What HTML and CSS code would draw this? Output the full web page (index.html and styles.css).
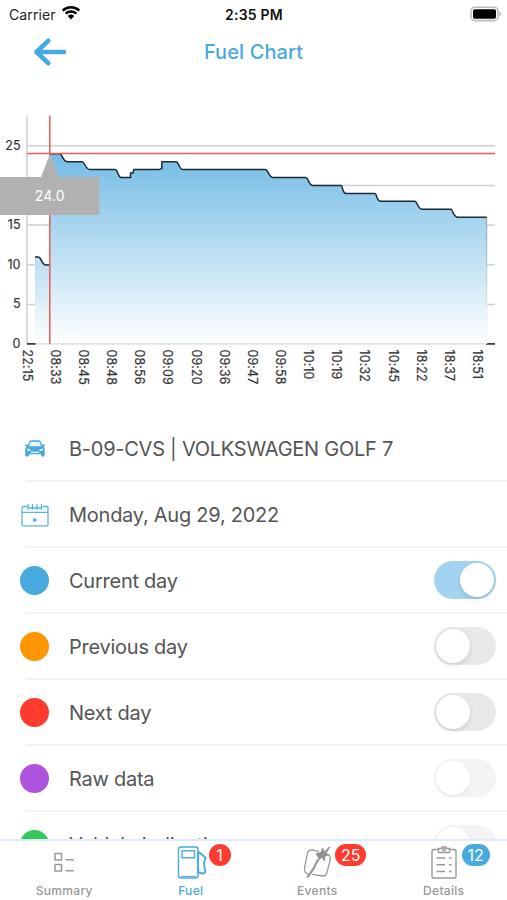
FILE: index.html
```
<!DOCTYPE html>
<html lang="en">
<head>
    <meta charset="UTF-8">
    <meta name="viewport" content="width=device-width, initial-scale=1.0">
    <title>Fuel Chart</title>
    <link rel="stylesheet" href="styles.css">
</head>
<body>
    <div class="screen">
        <div class="status-bar">
            <div class="carrier">
                <span>Carrier</span>
                <svg width="20" height="15" viewBox="0 0 20 15">
                    <path d="M1.7 5.5a12.2 12.2 0 0 1 16.6 0M4.6 8.6a8 8 0 0 1 10.8 0" fill="none" stroke="#000" stroke-width="2.4"/>
                    <path d="M6.8 11.1a4.7 4.7 0 0 1 6.4 0L10 14.4z"/>
                </svg>
            </div>
            <span class="time">2:35 PM</span>
            <div class="battery">
                <svg width="32" height="16" viewBox="0 0 32 16">
                    <rect x="1" y="1.2" width="27" height="13.4" rx="4" fill="#fff" stroke="#bdbdbd" stroke-width="1.6"/>
                    <rect x="3" y="3.2" width="23" height="9.6" rx="1.8"/>
                    <path d="M29.4 5.6q3 2.2 0 4.6z" fill="#aaa"/>
                </svg>
            </div>
        </div>

        <header>
            <svg class="back" width="34" height="28" viewBox="0 0 34 28">
                <path d="M31 14H3.5M15.2 2.8L3.5 14l11.7 11.2" fill="none" stroke="#48a9df" stroke-width="4.6" stroke-linecap="round" stroke-linejoin="round"/>
            </svg>
            <h1>Fuel Chart</h1>
        </header>

        <section class="chart">
            <svg width="507" height="290" viewBox="0 110 507 290">
                <defs>
                    <linearGradient id="fill" gradientUnits="userSpaceOnUse" x1="0" y1="154" x2="0" y2="344">
                        <stop offset="0" stop-color="#74bce6"/>
                        <stop offset="1" stop-color="#ffffff"/>
                    </linearGradient>
                    <linearGradient id="fillLow" gradientUnits="userSpaceOnUse" x1="0" y1="257" x2="0" y2="344">
                        <stop offset="0" stop-color="#b8ddf2"/>
                        <stop offset="1" stop-color="#ffffff"/>
                    </linearGradient>
                    <linearGradient id="edge" gradientUnits="userSpaceOnUse" x1="0" y1="217" x2="0" y2="344">
                        <stop offset="0" stop-color="#8fa5b2"/>
                        <stop offset="1" stop-color="#ffffff"/>
                    </linearGradient>
                </defs>

                <!-- grid -->
                <g class="grid">
                    <path d="M27 145.8H495M27 185.6H495M27 225H495M27 264.8H495M27 304.4H495"/>
                    <path d="M27 115.5V344"/>
                </g>

                <!-- area -->
                <path fill="url(#fillLow)" d="M35 257H38C42 257 41 265 46 265H49.500V344H35z"/>
                <path fill="url(#fill)" d="M49.500 153.700H60C62 153.700 63 161.700 67 161.700H82.500C84 161.700 86 169.600 90 169.600H115C118 169.600 118 177.600 121 177.600H130.500V173H133L134 169.600H159L161.800 168.500V161.700H176C179 161.700 179 169.600 183 169.600H265.500C268 169.600 269 177.600 273 177.600H305.500C309 177.600 308 185.600 313 185.600H341C343 185.600 342 193.400 346 193.400H375C377 193.400 376 201.300 381 201.300H415C417 201.300 418 209.300 422 209.300H451C453 209.300 453 217.200 458 217.200H486.500V344H49.500z"/>
                <path d="M27 343.900H495" stroke="#e2e2e2" stroke-width="1.600"/>
                <path d="M27 343.900H35.500M486 343.900H495" stroke="#3c3c3c" stroke-width="1.800"/>
                <rect x="486" y="217" width="1.200" height="127" fill="url(#edge)"/>

                <!-- level -->
                <path class="level" d="M35 257H38C42 257 41 265 46 265H49.500"/>
                <path class="level" d="M49.500 153.700H60C62 153.700 63 161.700 67 161.700H82.500C84 161.700 86 169.600 90 169.600H115C118 169.600 118 177.600 121 177.600H130.500V173H133L134 169.600H159L161.800 168.500V161.700H176C179 161.700 179 169.600 183 169.600H265.500C268 169.600 269 177.600 273 177.600H305.500C309 177.600 308 185.600 313 185.600H341C343 185.600 342 193.400 346 193.400H375C377 193.400 376 201.300 381 201.300H415C417 201.300 418 209.300 422 209.300H451C453 209.300 453 217.200 458 217.200H486.500"/>

                <!-- selected value -->
                <path class="cursor" d="M49.800 115.500V344M27 153.600H495"/>
                <path d="M50 154L59 177H99.200V215H0V177H41z" fill="#b1b1b1"/>
                <text class="marker" x="49.800" y="201">24.0</text>

                <g class="y-labels">
                    <text x="20.500" y="149.500">25</text>
                    <text x="20.500" y="228.700">15</text>
                    <text x="20.500" y="268.500">10</text>
                    <text x="20.500" y="308">5</text>
                    <text x="20.500" y="347.500">0</text>
                </g>
                <g class="x-labels">
                    <text transform="translate(22.500 349.500) rotate(90)">22:15</text>
                    <text transform="translate(50.700 349.500) rotate(90)">08:33</text>
                    <text transform="translate(78.900 349.500) rotate(90)">08:45</text>
                    <text transform="translate(107 349.500) rotate(90)">08:48</text>
                    <text transform="translate(135.200 349.500) rotate(90)">08:56</text>
                    <text transform="translate(163.300 349.500) rotate(90)">09:09</text>
                    <text transform="translate(191.500 349.500) rotate(90)">09:20</text>
                    <text transform="translate(219.600 349.500) rotate(90)">09:36</text>
                    <text transform="translate(247.800 349.500) rotate(90)">09:47</text>
                    <text transform="translate(275.900 349.500) rotate(90)">09:58</text>
                    <text transform="translate(304.100 349.500) rotate(90)">10:10</text>
                    <text transform="translate(332.200 349.500) rotate(90)">10:19</text>
                    <text transform="translate(360.400 349.500) rotate(90)">10:32</text>
                    <text transform="translate(388.500 349.500) rotate(90)">10:45</text>
                    <text transform="translate(416.700 349.500) rotate(90)">18:22</text>
                    <text transform="translate(444.800 349.500) rotate(90)">18:37</text>
                    <text transform="translate(473 349.500) rotate(90)">18:51</text>
                </g>
            </svg>
        </section>

        <ul class="options">
            <li>
                <span class="icon">
                    <svg width="20" height="17" viewBox="0 0 20 17">
                        <path d="M3 7L4.800 2Q5.200 1 6.500 1H13.500Q14.800 1 15.200 2L17 7" fill="#e6f4fc" stroke="#48a9df" stroke-width="1.300"/>
                        <path fill="#48a9df" fill-rule="evenodd" d="M.2 4.600H3L2.800 6.300H17.200L17 4.600H19.800V6L18.600 6.500Q19.700 7.500 19.700 9V15.500Q19.700 16.500 18.700 16.500H17Q16 16.500 16 15.500V14.300H4V15.500Q4 16.500 3 16.500H1.300Q.3 16.500 .3 15.500V9Q.3 7.500 1.400 6.500L.2 6zM2 8.500L2.600 10.500 5.800 10.900 5 9.300zM18 8.500L17.400 10.500 14.200 10.900 15 9.300zM6 11.700V12.900H14V11.700z"/>
                    </svg>
                </span>
                <span class="label plate">B-09-CVS | VOLKSWAGEN GOLF 7</span>
            </li>
            <li>
                <span class="icon">
                    <svg width="28" height="24" viewBox="0 0 28 24" fill="none" stroke="#5cb3e6" stroke-width="1.300">
                        <path d="M6.500 3.500H1.800Q1 3.500 1 4.300V22Q1 22.800 1.800 22.800H26.200Q27 22.800 27 22V4.300Q27 3.500 26.200 3.500H21.500M1 9.300H27M7 5H20.500"/>
                        <path d="M7 1V6.800M11.500 1V6.800M16 1V6.800M20.500 1V6.800"/>
                        <path d="M12 15.500H14.500L16 17 14.500 18.500H12z" fill="#48a9df" stroke="none"/>
                    </svg>
                </span>
                <span class="label date">Monday, Aug 29, 2022</span>
            </li>
            <li>
                <span class="dot current"></span>
                <span class="label">Current day</span>
                <span class="switch on"></span>
            </li>
            <li>
                <span class="dot previous"></span>
                <span class="label">Previous day</span>
                <span class="switch"></span>
            </li>
            <li>
                <span class="dot next"></span>
                <span class="label">Next day</span>
                <span class="switch"></span>
            </li>
            <li>
                <span class="dot raw"></span>
                <span class="label">Raw data</span>
                <span class="switch disabled"></span>
            </li>
            <li>
                <span class="dot vehicle"></span>
                <span class="label">Vehicle indication</span>
                <span class="switch disabled"></span>
            </li>
        </ul>

        <nav>
            <a class="tab">
                <svg width="38" height="36" viewBox="0 0 38 36" fill="none" stroke="#999" stroke-width="1.500">
                    <path d="M10 10.500H16.500V17H10zM10 21.500H16.500V28H10zM20.500 16.700H29M20.500 27.700H29"/>
                </svg>
                <span>Summary</span>
            </a>
            <a class="tab active">
                <svg width="38" height="36" viewBox="0 0 38 36" fill="none" stroke="#48a9df" stroke-width="1.400">
                    <rect x="6.500" y="4" width="19.500" height="31" rx="2.500"/>
                    <rect x="10" y="7.800" width="12.500" height="7"/>
                    <path d="M26 8.500L33.500 14.500 32.500 18Q31.300 21 32.500 24L33.300 28Q33.300 30.800 30.500 30.500L26 29M26 10V30" stroke-width="1.900"/>
                    <path d="M9 33.400H23.500" stroke-width="1"/>
                </svg>
                <span>Fuel</span>
                <b class="badge">1</b>
            </a>
            <a class="tab">
                <svg width="38" height="36" viewBox="0 0 38 36" fill="none" stroke="#999" stroke-width="1.300">
                    <path d="M21 8.300L14 7Q10.500 6.500 9.500 10L6.500 25Q6 29.500 10 31.200M14 31.300L25 33Q28 33.200 28.800 30L32.200 17Q32.500 14 31 11.500"/>
                    <path d="M9.300 34.500Q12.500 30 15 26.500Q18 21 20.500 16" stroke-width="2.200"/>
                    <path d="M21.500 16.500L18 10.500 23 9.500 24.500 5 26.500 9 31 4.500 28 10.500 31 12 27 13 26.500 18 24 14z" fill="#8c8c8c" stroke-width="1"/>
                    <path d="M24 13L32 4"/>
                </svg>
                <span>Events</span>
                <b class="badge wide">25</b>
            </a>
            <a class="tab">
                <svg width="38" height="36" viewBox="0 0 38 36" fill="none" stroke="#999" stroke-width="1.400">
                    <path d="M13 6.500H8.500Q7 6.500 7 8V33.500Q7 35 8.500 35H29.500Q31 35 31 33.500V8Q31 6.500 29.500 6.500H25"/>
                    <path d="M13.500 5.500V9.500H24.500V5.500H22Q21.500 3.800 19 3.800T16 5.500z"/>
                    <circle cx="19" cy="6.500" r="1.400"/>
                    <path d="M11.500 15H20M24 15H26.500M11.500 21.700H20M24 21.700H26.500M11.500 28.500H20M24 28.500H26.500"/>
                </svg>
                <span>Details</span>
                <b class="badge info">12</b>
            </a>
        </nav>
    </div>
</body>
</html>
```
FILE: styles.css
```
* {
    box-sizing: border-box;
}

body {
    margin: 0;
    font-family: Inter, "Liberation Sans", sans-serif;
    background-color: #fff;
    color: #555;
}

.screen {
    display: flex;
    flex-direction: column;
    height: 900px;
    overflow: hidden;
}

/* Status bar */
.status-bar {
    display: grid;
    grid-template-columns: 1fr auto 1fr;
    align-items: center;
    flex: none;
    height: 28px;
    padding: 0 5px 0 9px;
    font-size: 14px;
    color: #222;
}

.carrier {
    display: flex;
    align-items: center;
    gap: 5px;
    letter-spacing: 0.1px;
}

.carrier svg {
    margin-top: -3px;
}

.time {
    margin-left: -3px;
    font-weight: 600;
    letter-spacing: 0.2px;
    color: #111;
}

.battery {
    display: flex;
    justify-content: flex-end;
}

/* Header */
header {
    display: grid;
    grid-template-columns: 100px 1fr 100px;
    align-items: center;
    flex: none;
    height: 48px;
}

.back {
    margin-left: 33px;
}

h1 {
    margin: 0;
    font-size: 20px;
    font-weight: 500;
    letter-spacing: 0.1px;
    text-align: center;
    color: #48a9df;
}

/* Chart */
.chart {
    flex: none;
    height: 340px;
    padding-top: 34px;
}

.chart svg {
    display: block;
}

.grid path {
    stroke: #cfcfcf;
    stroke-width: 1.5;
}

.level {
    fill: none;
    stroke: #1c2b33;
    stroke-width: 1.5;
}

.cursor {
    fill: none;
    stroke: #ee5a52;
    stroke-width: 1.5;
}

.marker {
    font-size: 14px;
    letter-spacing: 0.2px;
    fill: #fff;
    text-anchor: middle;
}

.y-labels {
    font-size: 12.5px;
    fill: #333;
    stroke: #333;
    stroke-width: 0.2;
    text-anchor: end;
}

.x-labels {
    font-size: 12.4px;
    letter-spacing: 0.15px;
    fill: #333;
    stroke: #333;
    stroke-width: 0.2;
}

/* Options */
.options {
    flex: 1;
    min-height: 0;
    margin: 0;
    padding: 0;
    overflow: hidden;
    list-style: none;
}

.options li {
    display: flex;
    align-items: center;
    height: 66px;
    margin-left: 26px;
    padding-right: 11px;
    border-bottom: 2px solid #f2f2f2;
}

.icon,
.dot {
    display: flex;
    justify-content: center;
    flex: none;
    width: 29px;
    margin: 0 20px 0 -6px;
}

.icon {
    padding-top: 1px;
}

.dot {
    height: 29px;
    border-radius: 50%;
}

.current { background-color: #48a9df; }
.previous { background-color: #ff9500; }
.next { background-color: #ff3b30; }
.raw { background-color: #af52de; }
.vehicle { background-color: #34c759; }

.label {
    flex: 1;
    padding-top: 1px;
    font-size: 20px;
    letter-spacing: -0.25px;
    white-space: nowrap;
}

.switch {
    width: 62px;
    height: 38px;
    padding: 2px;
    border-radius: 19px;
    background-color: #e9e9ea;
}

.switch::before {
    content: "";
    display: block;
    width: 34px;
    height: 34px;
    border-radius: 50%;
    background-color: #fff;
    box-shadow: 0 2px 5px rgba(0, 0, 0, 0.13);
}

.switch.on {
    background-color: #a3d4ef;
}

.switch.on::before {
    margin-left: auto;
}

.switch.disabled {
    background-color: #f4f4f4;
}

.switch.disabled::before {
    box-shadow: 0 2px 4px rgba(0, 0, 0, 0.05);
}

/* Tabs */
nav {
    display: grid;
    grid-template-columns: repeat(4, 1fr);
    flex: none;
    height: 61px;
    padding-left: 1px;
    border-top: 2px solid #dfecf7;
}

.tab {
    position: relative;
    display: flex;
    flex-direction: column;
    align-items: center;
    gap: 4px;
    padding-top: 2px;
    font-size: 12px;
    font-weight: 500;
    letter-spacing: 0.3px;
    color: #999;
}

.tab.active {
    color: #48a9df;
}

.badge {
    position: absolute;
    top: 3px;
    left: 81px;
    min-width: 22px;
    height: 22px;
    padding: 0 5px;
    border-radius: 11px;
    background-color: #ff3b30;
    color: #fff;
    font-size: 16px;
    font-weight: 400;
    line-height: 22px;
    letter-spacing: 0;
    text-align: center;
}

.badge.wide {
    padding: 0 6px;
}

.badge.info {
    padding: 0 6px;
    background-color: #48a9df;
}
```
